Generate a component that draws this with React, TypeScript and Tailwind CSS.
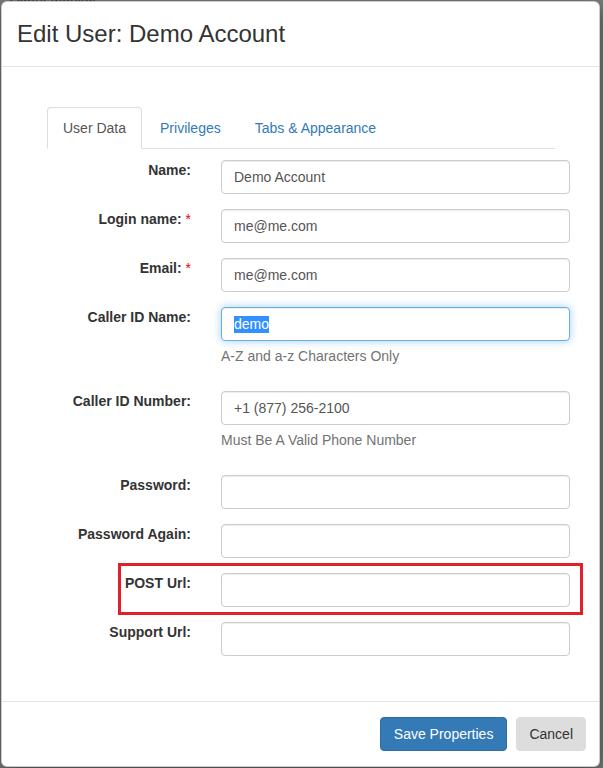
import React from "react";

type Field = {
  label: string;
  value?: string;
  required?: boolean;
  help?: string;
  focused?: boolean;
};

const fields: Field[] = [
  { label: "Name:", value: "Demo Account" },
  { label: "Login name:", value: "me@me.com", required: true },
  { label: "Email:", value: "me@me.com", required: true },
  { label: "Caller ID Name:", value: "demo", focused: true, help: "A-Z and a-z Characters Only" },
  { label: "Caller ID Number:", value: "+1 (877) 256-2100", help: "Must Be A Valid Phone Number" },
  { label: "Password:" },
  { label: "Password Again:" },
  { label: "POST Url:" },
  { label: "Support Url:" },
];

function Row({ f }: { f: Field }) {
  return (
    <div className="flex mb-[15px]">
      <label className="w-[189px] shrink-0 text-right font-bold text-[14px] leading-[20px] text-[#333]">
        {f.label}
        {f.required && <span className="text-[#e00] font-normal"> *</span>}
      </label>
      <div className="ml-[30px] w-[349px]">
        {f.focused ? (
          <div className="h-[34px] rounded-[4px] border border-[#66afe9] bg-white px-[12px] flex items-center text-[14px] text-[#555] shadow-[inset_0_1px_1px_rgba(0,0,0,0.075),0_0_8px_rgba(102,175,233,0.6)]">
            <span className="bg-[#3390ff] text-white leading-[17px]">{f.value}</span>
          </div>
        ) : (
          <input
            readOnly
            defaultValue={f.value ?? ""}
            className="block w-full h-[34px] rounded-[4px] border border-[#ccc] bg-white px-[12px] text-[14px] text-[#555] outline-none shadow-[inset_0_1px_1px_rgba(0,0,0,0.075)]"
          />
        )}
        {f.help && (
          <p className="mt-[5px] mb-[10px] text-[14px] leading-[20px] text-[#737373]">{f.help}</p>
        )}
      </div>
    </div>
  );
}

export default function App() {
  return (
    <div className="relative w-[603px] h-[768px] overflow-hidden bg-[#7c7c7c] font-['Liberation_Sans',Arial,sans-serif]">
      {/* page behind the backdrop, only its lower edge peeks out */}
      <div className="absolute left-[10px] top-[-10px] text-[14px] leading-[14px] text-[#3a3a3a]">Agent Monitor</div>

      <div className="relative ml-[1px] mt-[1px] w-[599px] h-[766px] flex flex-col bg-white rounded-[6px] border border-black/20 shadow-[0_5px_15px_rgba(0,0,0,0.5)]">
        <div className="h-[65px] shrink-0 border-b border-[#e5e5e5] px-[15px] py-[15px]">
          <h4 className="text-[24px] leading-[34px] text-[#333]">Edit User: Demo Account</h4>
        </div>

        <div className="flex-1 pt-[40px]">
          <ul className="ml-[45px] w-[508px] flex border-b border-[#ddd] text-[14px] leading-[20px]">
            <li className="-mb-px mr-[2px] rounded-t-[4px] border border-[#ddd] border-b-white bg-white px-[15px] py-[10px] text-[#555]">
              User Data
            </li>
            <li className="-mb-px mr-[2px] border border-transparent px-[15px] py-[10px] text-[#337ab7]">
              Privileges
            </li>
            <li className="-mb-px mr-[2px] border border-transparent px-[15px] py-[10px] text-[#337ab7]">
              Tabs &amp; Appearance
            </li>
          </ul>

          <div className="mt-[11px]">
            {fields.map((f) => (
              <Row key={f.label} f={f} />
            ))}
          </div>
        </div>

        <div className="h-[65px] shrink-0 border-t border-[#e5e5e5] pt-[15px] pr-[13px] flex justify-end gap-[9px]">
          <button className="h-[34px] rounded-[4px] border border-[#2e6da4] bg-[#337ab7] px-[13px] text-[14px] text-white">
            Save Properties
          </button>
          <button className="h-[34px] rounded-[4px] border border-[#ddd] bg-[#ddd] px-[12px] text-[14px] text-[#333]">
            Cancel
          </button>
        </div>
      </div>

      {/* annotation box */}
      <div className="absolute left-[118px] top-[563px] w-[465px] h-[52px] border-[3px] border-[#e0202b]" />
    </div>
  );
}
